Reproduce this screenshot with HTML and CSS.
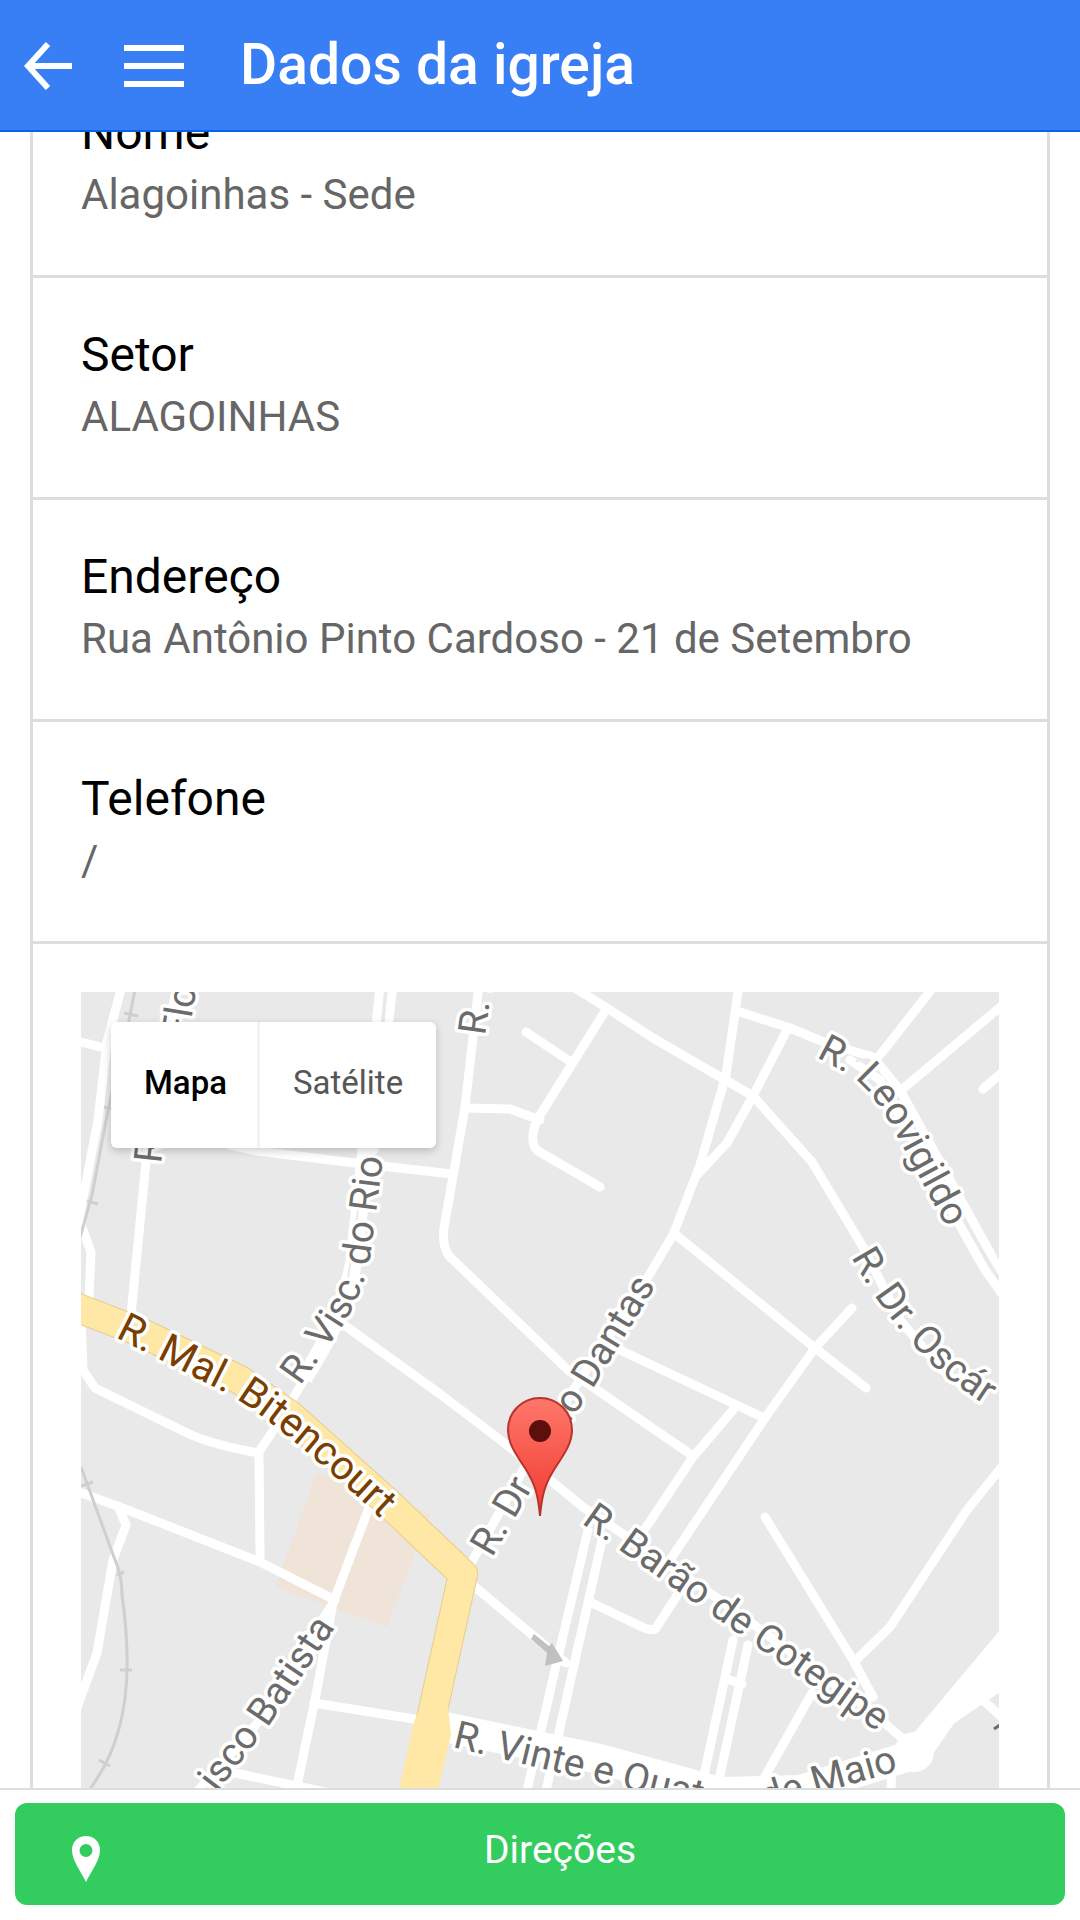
FILE: index.html
```html
<!DOCTYPE html>
<html lang="pt-BR">
<head>
    <meta charset="UTF-8">
    <meta name="viewport" content="width=device-width, initial-scale=1.0">
    <title>Dados da igreja</title>
    <link rel="stylesheet" href="styles.css">
</head>
<body>
    <header class="bar">
        <button class="bar-btn back" type="button" aria-label="Voltar">
            <svg width="48" height="48" viewBox="0 0 48 48"><path d="M24 2L4 24L24 46M4 24H48" fill="none" stroke="#fff" stroke-width="6"/></svg>
        </button>
        <button class="bar-btn" type="button" aria-label="Menu">
            <svg width="60" height="42" viewBox="0 0 60 42"><path d="M0 3H60M0 21H60M0 39H60" stroke="#fff" stroke-width="6"/></svg>
        </button>
        <h1>Dados da igreja</h1>
    </header>

    <main class="content" id="content">
        <div class="card">
            <section class="item">
                <h2>Nome</h2>
                <p>Alagoinhas - Sede</p>
            </section>
            <section class="item">
                <h2>Setor</h2>
                <p>ALAGOINHAS</p>
            </section>
            <section class="item">
                <h2>Endereço</h2>
                <p>Rua Antônio Pinto Cardoso - 21 de Setembro</p>
            </section>
            <section class="item">
                <h2>Telefone</h2>
                <p>/</p>
            </section>

            <div class="map-box">
                <div class="map">
                    <svg class="map-canvas" viewBox="81 992 918 1050" preserveAspectRatio="xMidYMid slice">
                        <defs>
                            <linearGradient id="pinFill" x1="0" y1="0" x2="0" y2="1">
                                <stop offset="0" stop-color="#ff776b"/>
                                <stop offset="1" stop-color="#f03a30"/>
                            </linearGradient>
                            <path id="pBitencourt" d="M115 1337L230 1395Q290 1430 420 1556"/>
                            <path id="pVisconde" d="M300 1386L334 1338Q362 1300 370 1258L388 1120"/>
                            <path id="pDr" d="M492 1558L559 1442"/>
                            <path id="pDantas" d="M562 1434L597 1382L675 1254"/>
                            <path id="pBarao" d="M581 1523L743 1637L900 1748"/>
                            <path id="pLeovigildo" d="M816 1057L850 1075Q877 1095 898 1138L948 1230"/>
                            <path id="pOscar" d="M851 1257Q880 1310 920 1352Q945 1382 1025 1430"/>
                            <path id="pNorte" d="M485 1036L497 950"/>
                            <path id="pFlor" d="M188 1040L203 950"/>
                            <path id="pFlorR" d="M161 1164L167 1110"/>
                            <path id="pBatista" d="M217 1793L272 1721L355 1598"/>
                            <path id="pVinte" d="M452 1747L610 1785L800 1832"/>
                            <path id="pMaio" d="M765 1810L820 1793L930 1762"/>
                        </defs>

                        <rect x="81" y="992" width="918" height="1050" fill="#e9e9e9"/>
                        <path d="M317 1473L430 1513L387 1627L275 1587Z" fill="#f0e4d8"/>

                        <!-- ruas -->
                        <g class="roads">
                            <path d="M122 985L107 1042L98 1120L84 1193L76 1235"/>
                            <path d="M81 1225L91 1252L88 1320"/>
                            <path d="M76 1041L105 1048"/>
                            <path d="M176 992L152 1100L131 1315"/>
                            <path d="M380 985L364 1150M393 985L374 1150"/>
                            <path d="M230 1145L257 1151L355 1163L452 1174"/>
                            <path d="M479 985L465 1107L444 1228Q442 1246 449 1256L568 1370L600 1392L693 1456"/>
                            <path d="M465 1108L510 1109L540 1120"/>
                            <path d="M607 1008L537 1120Q528 1143 538 1151L600 1187"/>
                            <path d="M526 1032L571 1062"/>
                            <path d="M570 985L607 1008L653 1038L753 1096L812 1162L863 1247L900 1320L940 1368L980 1400"/>
                            <path d="M739 985L726 1075L700 1165L673 1235L645 1282L540 1440L470 1565"/>
                            <path d="M787 1030L753 1096L727 1143L697 1175"/>
                            <path d="M740 1012L790 1028L826 1043L873 1057L900 1090L950 1180L1005 1280"/>
                            <path d="M850 1060L880 1080L940 1190L985 1270L1005 1298"/>
                            <path d="M935 985L880 1055M1005 1003L905 1087M1005 1070L983 1089"/>
                            <path d="M675 1234L815 1348L866 1388"/>
                            <path d="M852 1308L815 1348L767 1415L670 1560"/>
                            <path d="M678 1594L656 1628Q652 1632 640 1626L590 1602"/>
                            <path d="M620 1350L764 1418M733 1410L693 1457L643 1532"/>
                            <path d="M340 1322L440 1394L507 1445L583 1507L720 1600L870 1710L913 1748"/>
                            <path d="M588 1530L555 1670L526 1795M602 1540L574 1665L545 1795"/>
                            <path d="M475 1587L566 1663"/>
                            <path d="M765 1517L853 1660L873 1697M856 1660L890 1627L967 1510L1005 1463"/>
                            <path d="M733 1640L703 1780M748 1645L719 1780M730 1680L742 1684M812 1693L763 1780"/>
                            <path d="M892 1760L890 1820M985 1702L1005 1720"/>
                            <path d="M81 1320L83 1370L95 1388L187 1433Q210 1444 258 1453L275 1428L304 1380"/>
                            <path d="M259 1453L260 1557M76 1491L120 1507L260 1562L335 1600"/>
                            <path d="M118 1506L126 1525L113 1560L97 1653L76 1710"/>
                            <path d="M370 1505L333 1603L315 1700L294 1800"/>
                            <path d="M333 1603L260 1720L190 1800"/>
                            <path d="M314 1703L420 1720M230 1772L340 1795"/>
                        </g>
                        <path class="road-wide" d="M304 1378Q345 1315 354 1260L367 1140"/>
                        <path class="road-main" d="M435 1725L600 1759L720 1792L800 1790L913 1755"/>
                        <path d="M913 1734L1000 1630V1680L955 1722L930 1758ZM940 1718L1000 1680V1692L950 1726Z" fill="#fff"/>
                        <circle cx="914" cy="1752" r="20" fill="#fff"/>
                        <path class="lane" d="M386 992L383 1030M358 1210L347 1285M856 1061L868 1059L880 1068M961 1214L999 1278"/>

                        <!-- linha do trem -->
                        <path class="rail" d="M136 985L128 1025L108 1110L92 1195L78 1245M124 1013L138 1016M104 1107L112 1109M87 1201L98 1204"/>
                        <path class="rail" d="M81 1467L115 1560Q122 1575 122 1595Q134 1680 118 1732Q110 1762 88 1792M81 1486L93 1482M117 1575L124 1572M120 1670L132 1670M99 1760L110 1766"/>

                        <!-- avenida -->
                        <path class="avenue-edge" d="M70 1305L140 1332L240 1380L290 1415L385 1500L463 1574L433 1710L418 1780"/>
                        <path class="avenue" d="M70 1305L140 1332L240 1380L290 1415L385 1500L463 1574L433 1710L418 1780"/>
                        <path d="M421 1706L414 1722L398 1794H437L451 1735L448 1706Z" fill="#ffe8a6"/>

                        <path d="M534 1634L549 1646L552 1643L563 1661L545 1666L547 1653L531 1639Z" fill="#c0c0c0"/>

                        <g class="street">
                            <text><textPath href="#pFlor">Flor</textPath></text>
                            <text><textPath href="#pFlorR">R</textPath></text>
                            <text><textPath href="#pVisconde">R. Visc. do Rio</textPath></text>
                            <text><textPath href="#pNorte">R. B</textPath></text>
                            <text><textPath href="#pLeovigildo">R. Leovigildo</textPath></text>
                            <text><textPath href="#pOscar">R. Dr. Oscár</textPath></text>
                            <text><textPath href="#pDr">R. Dr</textPath></text>
                            <text><textPath href="#pDantas">no Dantas</textPath></text>
                            <text><textPath href="#pBarao">R. Barão de Cotegipe</textPath></text>
                            <text><textPath href="#pBatista">isco Batista</textPath></text>
                            <text><textPath href="#pVinte">R. Vinte e Quatro</textPath></text>
                            <text><textPath href="#pMaio">de Maio</textPath></text>
                            <text class="avenue-name"><textPath href="#pBitencourt">R. Mal. Bitencourt</textPath></text>
                        </g>
                        <path d="M994 1729L1000 1725" stroke="#6b6b6b" stroke-width="3"/>

                        <!-- marcador -->
                        <path d="M540 1516C538 1494 535 1484 525 1468C515 1453 508 1443 508 1430C508 1412 522 1398 540 1398C558 1398 572 1412 572 1430C572 1443 565 1453 555 1468C545 1484 542 1494 540 1516Z" fill="url(#pinFill)" stroke="#b8332c" stroke-width="2"/>
                        <circle cx="540" cy="1431" r="11" fill="#5c0f0d"/>
                    </svg>
                    <div class="map-type">
                        <button class="active" type="button">Mapa</button>
                        <button type="button">Satélite</button>
                    </div>
                </div>
            </div>
        </div>
    </main>

    <footer class="footer">
        <button class="directions" type="button">
            <svg class="pin" width="28" height="46" viewBox="0 0 28 46"><path fill="#fff" fill-rule="evenodd" d="M14 0C6 0 0 6 0 14C0 25 9 35 14 46C19 35 28 25 28 14C28 6 22 0 14 0ZM14 8A6.500 6.500 0 1 1 14 21A6.500 6.500 0 1 1 14 8Z"/></svg>
            Direções
        </button>
    </footer>

    <script>
        document.getElementById('content').scrollTop = 139;
    </script>
</body>
</html>
```
FILE: styles.css
```css
* {
    margin: 0;
    padding: 0;
    box-sizing: border-box;
    font-family: Roboto, "Liberation Sans", sans-serif;
}

body {
    display: flex;
    flex-direction: column;
    height: 100vh;
    overflow: hidden;
    background-color: #fff;
    color: #000;
}

button {
    border: none;
    background: none;
    cursor: pointer;
}

.bar {
    display: flex;
    align-items: center;
    flex: none;
    height: 132px;
    padding: 0 24px;
    background-color: #387ef5;
    border-bottom: 2px solid #0c60ee;
}

.bar-btn {
    display: flex;
    padding-top: 2px;
}

.back {
    margin-right: 52px;
}

.bar h1 {
    margin-left: 56px;
    font-size: 57px;
    font-weight: 500;
    line-height: 132px;
    color: #fff;
}

.content {
    flex: 1;
    min-height: 0;
    overflow-y: auto;
    scrollbar-width: none;
}

.card {
    margin: 60px 30px;
    border: 3px solid #ddd;
}

.item {
    padding: 48px 48px 50px;
    border-bottom: 3px solid #ddd;
}

.item h2 {
    margin-bottom: 3px;
    font-size: 48px;
    font-weight: 400;
    line-height: 58px;
}

.item p {
    font-size: 42px;
    line-height: 60px;
    color: #666;
}

.map-box {
    padding: 48px;
}

.map {
    position: relative;
}

.map-canvas {
    display: block;
    width: 100%;
    height: 1050px;
}

.roads path {
    fill: none;
    stroke: #fff;
    stroke-width: 9;
    stroke-linecap: round;
    stroke-linejoin: round;
}

.road-wide {
    fill: none;
    stroke: #fff;
    stroke-width: 17;
}

.road-main {
    fill: none;
    stroke: #fff;
    stroke-width: 30;
}

.lane {
    fill: none;
    stroke: #e9e9e9;
    stroke-width: 2;
}

.rail {
    fill: none;
    stroke: #cfcfcf;
    stroke-width: 3;
}

.avenue-edge {
    fill: none;
    stroke: #e6cd8c;
    stroke-width: 30;
    stroke-linejoin: round;
}

.avenue {
    fill: none;
    stroke: #ffe8a6;
    stroke-width: 28;
    stroke-linejoin: round;
}

.street text {
    font-size: 39px;
    fill: #6b6b6b;
    stroke: #fff;
    stroke-width: 7px;
    stroke-linejoin: round;
    paint-order: stroke;
}

.street .avenue-name {
    font-size: 41px;
    fill: #7a3e00;
}

/* botões sobre o mapa */
.map-type {
    position: absolute;
    top: 30px;
    left: 30px;
    display: flex;
    background-color: #fff;
    border-radius: 6px;
    box-shadow: 0 3px 9px rgba(0, 0, 0, 0.2);
}

.map-type button {
    height: 126px;
    padding: 0 33px 6px;
    font-size: 33px;
    color: #565656;
}

.map-type .active {
    font-weight: 500;
    color: #000;
    box-shadow: inset -3px 0 #f3f3f3;
}

.footer {
    flex: none;
    padding: 13px 15px 15px;
    background-color: #fff;
    border-top: 2px solid #ddd;
}

.directions {
    position: relative;
    width: 100%;
    height: 102px;
    padding: 0 0 9px 40px;
    border-radius: 12px;
    background-color: #33cd5f;
    font-size: 39px;
    color: #fff;
}

.pin {
    position: absolute;
    left: 57px;
    top: 33px;
}
```
